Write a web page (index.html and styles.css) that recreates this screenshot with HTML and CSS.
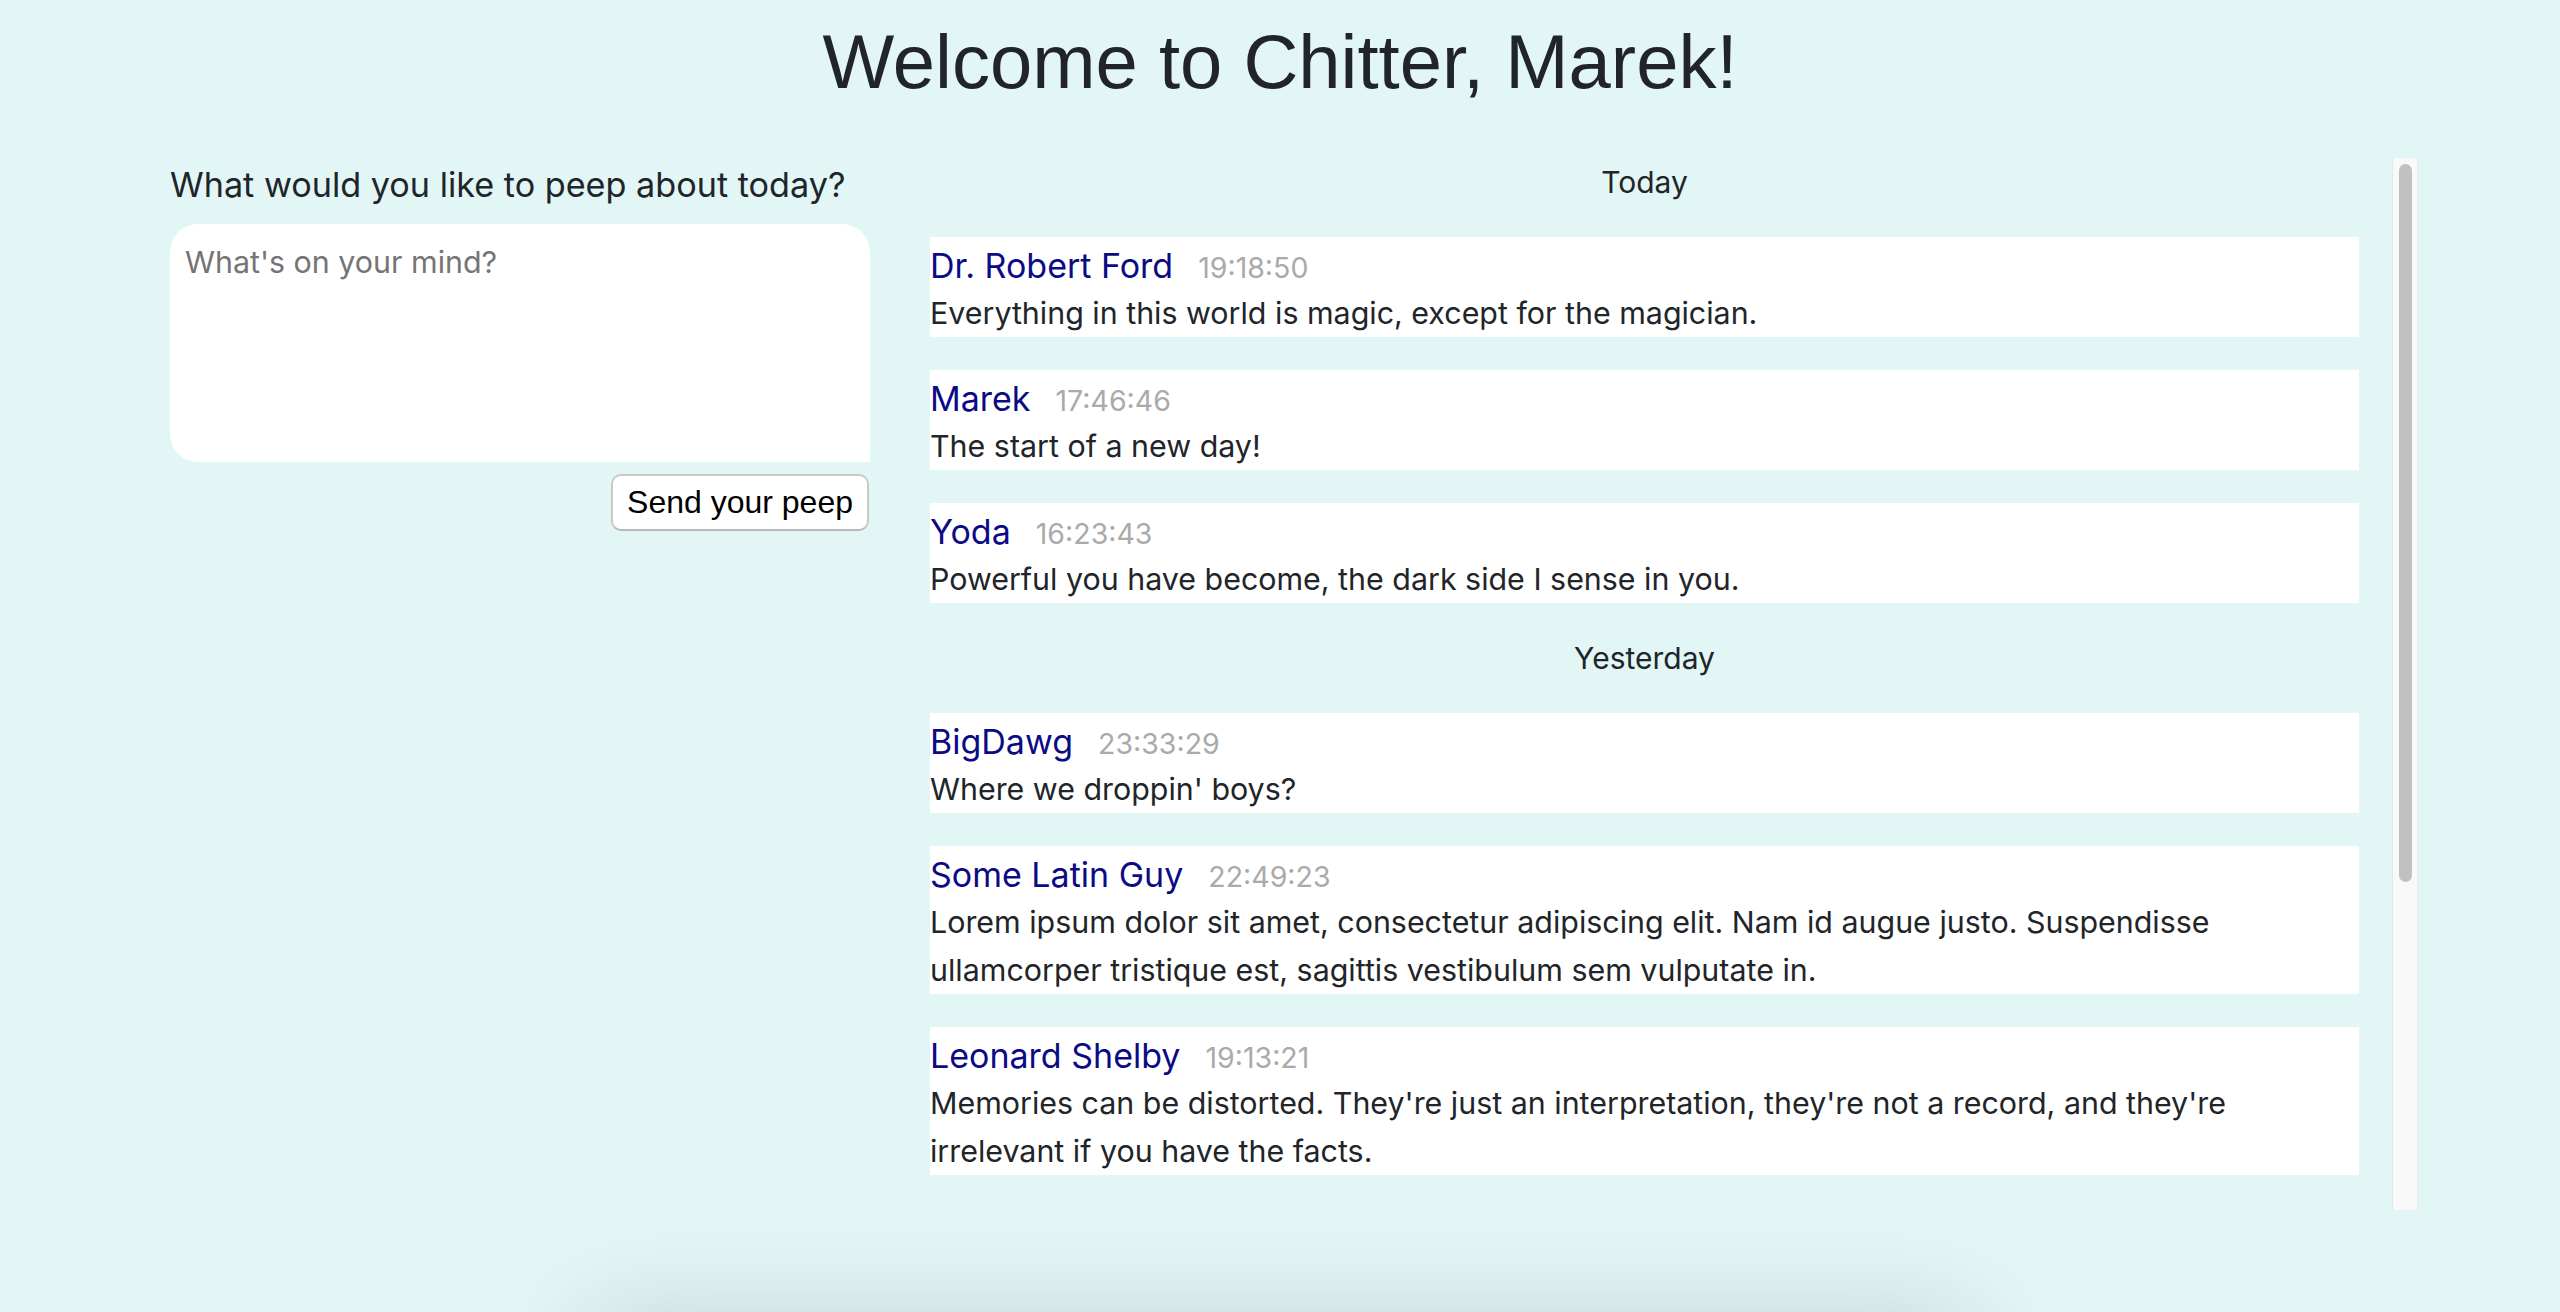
FILE: index.html
```html
<!DOCTYPE html>
<html lang="en">
<head>
<meta charset="utf-8">
<title>Chitter</title>
<link rel="stylesheet" href="styles.css">
</head>
<body>
  <h1 class="title">Welcome to Chitter, Marek!</h1>
  <main class="page">
    <section class="compose">
      <h2 class="compose-heading">What would you like to peep about today?</h2>
      <form class="compose-form">
        <textarea class="compose-input" placeholder="What's on your mind?"></textarea>
        <div class="compose-actions">
          <button type="button" class="send-btn">Send your peep</button>
        </div>
      </form>
    </section>
    <section class="feed-panel">
      <div class="feed">
        <div class="day">Today</div>
        <article class="peep">
          <div class="peep-head"><span class="peep-name">Dr. Robert Ford</span><span class="peep-time">19:18:50</span></div>
          <p class="peep-text">Everything in this world is magic, except for the magician.</p>
        </article>
        <article class="peep">
          <div class="peep-head"><span class="peep-name">Marek</span><span class="peep-time">17:46:46</span></div>
          <p class="peep-text">The start of a new day!</p>
        </article>
        <article class="peep">
          <div class="peep-head"><span class="peep-name">Yoda</span><span class="peep-time">16:23:43</span></div>
          <p class="peep-text">Powerful you have become, the dark side I sense in you.</p>
        </article>
        <div class="day">Yesterday</div>
        <article class="peep">
          <div class="peep-head"><span class="peep-name">BigDawg</span><span class="peep-time">23:33:29</span></div>
          <p class="peep-text">Where we droppin' boys?</p>
        </article>
        <article class="peep">
          <div class="peep-head"><span class="peep-name">Some Latin Guy</span><span class="peep-time">22:49:23</span></div>
          <p class="peep-text">Lorem ipsum dolor sit amet, consectetur adipiscing elit. Nam id augue justo. Suspendisse ullamcorper tristique est, sagittis vestibulum sem vulputate in.</p>
        </article>
        <article class="peep">
          <div class="peep-head"><span class="peep-name">Leonard Shelby</span><span class="peep-time">19:13:21</span></div>
          <p class="peep-text">Memories can be distorted. They're just an interpretation, they're not a record, and they're irrelevant if you have the facts.</p>
        </article>
      </div>
      <div class="scrollbar" aria-hidden="true">
        <div class="scrollbar-thumb"></div>
      </div>
    </section>
  </main>
  <footer class="footer"></footer>
</body>
</html>
```
FILE: styles.css
```css
html {
  scrollbar-width: none;
}

body {
  margin: 0;
  background: #e3f6f6;
  color: #212529;
  font-family: Inter, "Noto Sans", sans-serif;
}

.title {
  margin: 16px 0 0;
  font-family: "Liberation Sans", Arial, sans-serif;
  font-weight: 400;
  font-size: 76px;
  line-height: 91px;
  text-align: center;
  color: #212529;
}

.page {
  display: grid;
  grid-template-columns: 700px 1488px;
  column-gap: 60px;
  align-items: start;
  margin-top: 51px;
  padding-left: 170px;
}

.compose-heading {
  margin: 7px 0 19px;
  font-size: 34.2px;
  font-weight: 400;
  line-height: 40px;
}

.compose-form {
  display: flex;
  flex-direction: column;
}

.compose-input {
  display: block;
  box-sizing: border-box;
  width: 700px;
  height: 238px;
  padding: 16px 15px;
  border: none;
  border-radius: 28px 28px 0 28px;
  background: #fff;
  font-family: Inter, "Noto Sans", sans-serif;
  font-size: 30.4px;
  line-height: 1.5;
  color: #212529;
  resize: none;
  outline: none;
}

.compose-input::placeholder {
  color: #757575;
}

.compose-actions {
  display: flex;
  justify-content: flex-end;
  margin-top: 12px;
  padding-right: 1px;
}

.send-btn {
  box-sizing: border-box;
  height: 57px;
  padding: 0 14px;
  border: 2px solid #c9c9c9;
  border-bottom-color: #b9b9b9;
  border-radius: 10px;
  background: #fff;
  font-family: "Liberation Sans", Arial, sans-serif;
  font-size: 32px;
  color: #000;
}

.feed-panel {
  display: flex;
  height: 1052px;
}

.feed {
  flex: 1;
  min-width: 0;
  overflow: hidden;
  display: flex;
  flex-direction: column;
  gap: 33px;
  padding: 2px 33px 0 0;
}

.scrollbar {
  flex: none;
  box-sizing: border-box;
  width: 26px;
  padding: 6px 5px 0 6px;
  background: #f9f9f9;
  border-left: 1px solid #e6e6e6;
  border-right: 1px solid #ececec;
}

.scrollbar-thumb {
  height: 718px;
  border-radius: 8px;
  background: #c1c1c1;
}

.day {
  flex: none;
  font-size: 30px;
  line-height: 44px;
  text-align: center;
}

.peep {
  flex: none;
  background: #fff;
}

.peep-head {
  box-sizing: border-box;
  height: 52px;
  padding-top: 3px;
  font-size: 34px;
  line-height: 52px;
}

.peep-name {
  color: #0b0b85;
}

.peep-time {
  margin-left: 25px;
  font-size: 28.5px;
  line-height: 1;
  color: #aaaaaa;
}

.peep-text {
  margin: 0;
  font-size: 30.4px;
  line-height: 48px;
}

.footer {
  width: 1380px;
  height: 80px;
  margin: 110px auto 0;
  background: #e3f6f6;
  box-shadow: 0 0 100px rgba(0, 0, 0, 0.17);
}
```
